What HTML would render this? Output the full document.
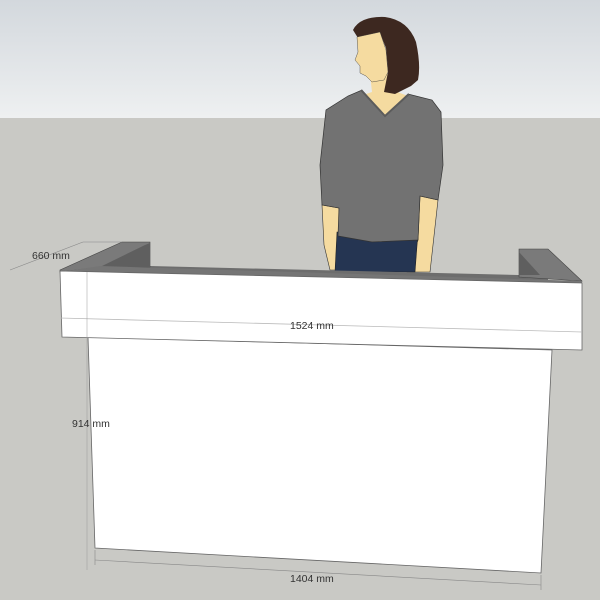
<!DOCTYPE html>
<html><head><style>body{margin:0}svg{display:block}</style></head><body>
<svg width="600" height="600" viewBox="0 0 600 600" xmlns="http://www.w3.org/2000/svg" font-family="Liberation Sans, sans-serif" font-size="10.5">
<defs><linearGradient id="sky" x1="0" y1="0" x2="0" y2="1"><stop offset="0" stop-color="#d3d8dd"/><stop offset="1" stop-color="#eef0f1"/></linearGradient></defs>
<rect width="600" height="118" fill="url(#sky)"/>
<rect y="118" width="600" height="482" fill="#c9c9c5"/>
<!-- woman arms/hands -->
<path d="M322 205 L324 245 L330 270 L341 270 L339 208 Z" fill="#f5dba0" stroke="#333" stroke-width="0.6"/>
<path d="M420 196 L418 240 L407 272 L430 272 L438 200 Z" fill="#f5dba0" stroke="#333" stroke-width="0.6"/>
<path d="M335 272 L337 232 L418 232 L415 272 Z" fill="#253552" stroke="#222" stroke-width="0.6"/>
<!-- neck -->
<path d="M370 74 L372 92 L360 96 L385 118 L408 96 L392 90 L390 74 Z" fill="#f5dba0"/>
<path d="M322 205 L320 165 L326 110 L348 96 L362 90 L385 116 L408 94 L432 100 L441 112 L443 165 L438 200 L420 196 L418 240 L372 242 L338 236 L339 208 Z" fill="#727272" stroke="#333" stroke-width="0.7"/>
<path d="M361 90 L385 116 L409 94" fill="none" stroke="#5c5c5c" stroke-width="2"/>
<!-- hair -->
<path d="M353 30 Q360 16 385 17 Q408 20 416 42 Q421 65 418 80 L411 86 L395 94 L384 92 L388 72 L386 48 L380 33 L358 38 Z" fill="#3d2820"/>
<!-- face -->
<path d="M357 37 L380 32 L386 50 L388 72 L384 80 L372 82 L366 76 L360 73 L360 66 L355 60 L358 52 Z" fill="#f5dba0" stroke="#333" stroke-width="0.4"/>
<!-- back top -->
<polygon points="100,266 150,266 518,275 548,276 548,282 100,272" fill="#6d6d6d"/>
<polygon points="60,270 122,242 150,242 150,267 100,267 60,272" fill="#7a7a7a" stroke="#444" stroke-width="0.6"/>
<polygon points="100,267 145,245 150,243 150,267" fill="#5f5f5f"/>
<polygon points="519,249 548,249 582,281 519,277" fill="#7a7a7a" stroke="#444" stroke-width="0.6"/>
<polygon points="519,252 540,275 519,275" fill="#5f5f5f"/>
<polygon points="100,266 582,281 582,284 60,272" fill="#757575"/>
<polygon points="88,337 552,350 541,573 95,548" fill="#fff" stroke="#666" stroke-width="0.8"/>
<polygon points="60,271 582,283 582,350 62,337" fill="#fff" stroke="#666" stroke-width="0.8"/>
<line x1="60" y1="318" x2="582" y2="332" stroke="#bbb" stroke-width="0.8"/>
<line x1="87" y1="272" x2="87" y2="570" stroke="#999" stroke-width="0.5"/>
<g stroke="#888" stroke-width="0.6" fill="none">
<line x1="10" y1="270" x2="83" y2="242"/><line x1="83" y1="242" x2="122" y2="242"/>
<line x1="95" y1="560" x2="541" y2="585"/><line x1="95" y1="550" x2="95" y2="565"/><line x1="541" y1="575" x2="541" y2="590"/>
</g>
<g fill="#333">
<text x="32" y="259">660 mm</text>
<text x="290" y="329">1524 mm</text>
<text x="72" y="427">914 mm</text>
<text x="290" y="582">1404 mm</text>
</g>
</svg>
</body></html>
